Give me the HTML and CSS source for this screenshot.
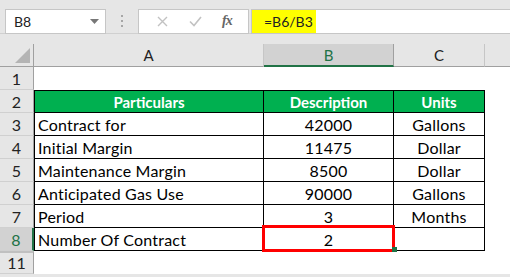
FILE: index.html
```html
<!DOCTYPE html>
<html lang="en">
  <head>
    <meta charset="UTF-8" />
    <meta name="viewport" content="width=device-width, initial-scale=1.0" />
    <title>Number Of Contract</title>
    <link rel="stylesheet" href="styles.css">
  </head>
  <body>
    <div class="formula-bar">
      <div class="name-box">
        <span>B8</span>
        <svg class="caret" width="9" height="5" viewBox="0 0 9 5"><path d="M0 0h9L4.5 5z" fill="#777" /></svg>
      </div>
      <svg class="grip" width="3" height="12" viewBox="0 0 3 12">
        <rect x="0" y="0" width="2" height="2" fill="#a6a6a6" />
        <rect x="0" y="5" width="2" height="2" fill="#a6a6a6" />
        <rect x="0" y="10" width="2" height="2" fill="#a6a6a6" />
      </svg>
      <div class="fx-buttons">
        <svg width="11" height="11" viewBox="0 0 11 11"><path d="M1 1l9 9M10 1l-9 9" stroke="#c2c2c2" stroke-width="1.4" fill="none" /></svg>
        <svg width="13" height="11" viewBox="0 0 13 11"><path d="M1 5.5l4 4L12 1" stroke="#c2c2c2" stroke-width="1.6" fill="none" /></svg>
        <span class="fx">fx</span>
      </div>
      <div class="formula">
        <span class="formula-text">=B6/B3</span>
      </div>
    </div>

    <div class="sheet">
      <div class="corner"><span class="corner-mark"></span></div>
      <div class="col-head">A</div>
      <div class="col-head active">B</div>
      <div class="col-head">C</div>
      <div class="col-head last"></div>

      <div class="row-head">1</div>
      <div class="cell"></div>
      <div class="cell"></div>
      <div class="cell"></div>
      <div class="cell"></div>

      <div class="row-head">2</div>
      <div class="cell boxed title first top">Particulars</div>
      <div class="cell boxed title top">Description</div>
      <div class="cell boxed title top">Units</div>
      <div class="cell"></div>

      <div class="row-head">3</div>
      <div class="cell boxed first">Contract for</div>
      <div class="cell boxed center">42000</div>
      <div class="cell boxed center">Gallons</div>
      <div class="cell"></div>

      <div class="row-head">4</div>
      <div class="cell boxed first">Initial Margin</div>
      <div class="cell boxed center">11475</div>
      <div class="cell boxed center">Dollar</div>
      <div class="cell"></div>

      <div class="row-head">5</div>
      <div class="cell boxed first">Maintenance Margin</div>
      <div class="cell boxed center">8500</div>
      <div class="cell boxed center">Dollar</div>
      <div class="cell"></div>

      <div class="row-head">6</div>
      <div class="cell boxed first">Anticipated Gas Use</div>
      <div class="cell boxed center">90000</div>
      <div class="cell boxed center">Gallons</div>
      <div class="cell"></div>

      <div class="row-head">7</div>
      <div class="cell boxed first">Period</div>
      <div class="cell boxed center">3</div>
      <div class="cell boxed center">Months</div>
      <div class="cell"></div>

      <div class="row-head active">8</div>
      <div class="cell boxed first">Number Of Contract</div>
      <div class="cell boxed center selected">2<span class="highlight"></span><span class="handle"></span></div>
      <div class="cell boxed center"></div>
      <div class="cell"></div>

      <div class="row-head hidden-above">11</div>
      <div class="cell"></div>
      <div class="cell"></div>
      <div class="cell"></div>
      <div class="cell"></div>
    </div>
  </body>
</html>
```

FILE: styles.css
```css
body {
  margin: 0;
  background: #e6e6e6;
  font-family: 'Lato', 'Liberation Sans', sans-serif;
  font-size: 15px;
  color: #000;
  width: 510px;
  height: 277px;
  overflow: hidden;
}

.formula-bar {
  display: flex;
  align-items: center;
  height: 34px;
  padding-top: 9px;
  box-sizing: border-box;
  border-bottom: 1px solid #d0d0d0;
  margin-bottom: 10px;
}

.name-box {
  width: 101px;
  height: 25px;
  margin-left: 5px;
  box-sizing: border-box;
  background: #fff;
  border: 1px solid #c6c6c6;
  display: flex;
  align-items: center;
  justify-content: space-between;
  padding: 0 6px 0 8px;
  font-size: 14px;
  color: #222;
}

.grip {
  margin: 0 14px 0 15px;
}

.fx-buttons {
  width: 111px;
  height: 25px;
  box-sizing: border-box;
  background: #fff;
  border: 1px solid #c6c6c6;
  display: flex;
  align-items: center;
  justify-content: space-around;
  padding: 0 6px 0 8px;
}

.fx {
  font-family: 'Liberation Serif', serif;
  font-style: italic;
  font-weight: bold;
  font-size: 14px;
  color: #666;
  letter-spacing: -1px;
}

.formula {
  flex: 1;
  height: 25px;
  margin-left: 2px;
  box-sizing: border-box;
  background: #fff;
  border: 1px solid #c6c6c6;
  border-right: none;
  display: flex;
  align-items: stretch;
}

.formula-text {
  background: #ffff00;
  width: 64px;
  padding-left: 12px;
  box-sizing: border-box;
  display: flex;
  align-items: center;
  font-size: 14px;
  color: #222;
}

.sheet {
  display: grid;
  grid-template-columns: 34px 230px 130px 91px 1fr;
  grid-auto-rows: 23px;
  background: #fff;
}

.corner,
.col-head,
.row-head {
  background: #e6e6e6;
  box-sizing: border-box;
  display: flex;
  align-items: center;
  justify-content: center;
  color: #222;
}

.corner {
  border-right: 1px solid #a0a0a0;
  border-bottom: 1px solid #a0a0a0;
  position: relative;
}

.corner-mark {
  position: absolute;
  right: 3px;
  bottom: 3px;
  width: 0;
  height: 0;
  border-left: 15px solid transparent;
  border-bottom: 15px solid #b4b4b4;
}

.col-head {
  border-right: 1px solid #c6c6c6;
  border-bottom: 1px solid #a0a0a0;
}

.col-head.active {
  background: #d2d2d2;
  color: #217346;
  border-bottom: 2px solid #217346;
  border-right-color: #a0a0a0;
}

.col-head.last {
  border-right: none;
}

.row-head {
  border-right: 1px solid #a0a0a0;
  border-bottom: 1px solid #d0d0d0;
  font-size: 16px;
}

.row-head.active {
  background: #d2d2d2;
  color: #217346;
  border-right: 2px solid #217346;
}

.row-head.hidden-above {
  border-top: 2px solid #c0c0c0;
  align-items: flex-end;
  padding-bottom: 1px;
}

.cell {
  box-sizing: border-box;
  display: flex;
  align-items: center;
  padding: 0 3px;
  white-space: nowrap;
  font-size: 16px;
  letter-spacing: 0.2px;
  padding-top: 1px;
}

.boxed {
  border-right: 1px solid #000;
  border-bottom: 1px solid #000;
}

.boxed.first {
  border-left: 1px solid #000;
}

.boxed.top {
  border-top: 1px solid #000;
}

.center {
  justify-content: center;
}

.title {
  background: #00b050;
  color: #fff;
  font-weight: bold;
  font-size: 15px;
  letter-spacing: 0;
  justify-content: center;
}

.selected {
  position: relative;
}

.highlight {
  position: absolute;
  top: -3px;
  left: -2px;
  right: -2px;
  bottom: -2px;
  border: 3px solid #ff0000;
}

.handle {
  position: absolute;
  right: -4px;
  bottom: -2px;
  width: 5px;
  height: 5px;
  background: #217346;
}
```
